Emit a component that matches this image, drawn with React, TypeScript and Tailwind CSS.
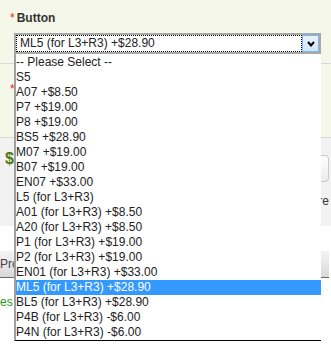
import React from 'react';

const options = [
  '-- Please Select --',
  'S5',
  'A07 +$8.50',
  'P7 +$19.00',
  'P8 +$19.00',
  'BS5 +$28.90',
  'M07 +$19.00',
  'B07 +$19.00',
  'EN07 +$33.00',
  'L5 (for L3+R3)',
  'A01 (for L3+R3) +$8.50',
  'A20 (for L3+R3) +$8.50',
  'P1 (for L3+R3) +$19.00',
  'P2 (for L3+R3) +$19.00',
  'EN01 (for L3+R3) +$33.00',
  'ML5 (for L3+R3) +$28.90',
  'BL5 (for L3+R3) +$28.90',
  'P4B (for L3+R3) -$6.00',
  'P4N (for L3+R3) -$6.00',
];

const selected = 'ML5 (for L3+R3) +$28.90';

// Open native-looking select, drawn over the product form
const OpenSelect: React.FC = () => (
  <div className="absolute left-[14px] top-[33px] w-[307px]">
    <div className="flex h-[21px] border-2 border-[#a9a9a9] bg-white">
      <div className="flex flex-1 items-center border border-dotted border-black pl-[3px] leading-[15px] text-[#222]">
        {selected}
      </div>
      <div className="flex w-[17px] items-center justify-center border border-[#7eb4ea] bg-gradient-to-b from-[#e8f3fe] to-[#d2e6fb]">
        <svg width="8" height="6" viewBox="0 0 8 6">
          <path d="M1 1 L4 4.5 L7 1" fill="none" stroke="#000" strokeWidth={2} />
        </svg>
      </div>
    </div>
    <ul className="border-b border-l-2 border-b-black border-l-[#a0a0a0] bg-white pt-[1px]">
      {options.map((opt) => (
        <li
          key={opt}
          className={`h-[15px] whitespace-nowrap leading-[15px] ${
            opt === selected ? 'bg-[#3399ff] text-white' : 'text-[#222]'
          }`}
        >
          {opt}
        </li>
      ))}
    </ul>
  </div>
);

export default function App() {
  return (
    <div className="relative h-[348px] w-[331px] overflow-hidden bg-white font-['Liberation_Sans',Arial,sans-serif] text-[12px] text-[#222]">
      {/* Button option */}
      <div className="h-[64px] border-b border-[#d9d9d9] bg-[#f5f8e9] pl-[10px] pt-[11px]">
        <div className="flex leading-[15px]">
          <span className="text-[#e8261a]">*</span>
          <span className="ml-[2px] font-bold text-[#333]">Button</span>
        </div>
      </div>

      {/* Second option, its label hidden under the list */}
      <div className="h-[74px] border-b border-[#d9d9d9] bg-[#f5f8e9] pl-[10px] pt-[16px]">
        <span className="leading-[15px] text-[#e8261a]">*</span>
      </div>

      {/* Price and quantity */}
      <div className="h-[88px] bg-[#f2f2f2] pl-[5px] pr-[2px] pt-[11px]">
        <div className="flex items-start gap-[20px]">
          <span className="text-[16px] font-bold leading-[20px] text-[#4f7a12]">$</span>
          <div className="mt-[6px] h-[27px] flex-1 rounded-[4px] border border-[#c9c9c9] bg-gradient-to-b from-white to-[#ececec]" />
        </div>
        <div className="mt-[12px] text-right leading-[15px] text-[#333]">re</div>
      </div>

      {/* Checkout */}
      <div className="pr-[2px] pt-[25px]">
        <div className="flex h-[27px] items-center border-b border-[#6b6b6b] bg-gradient-to-b from-[#f4f4f4] to-[#d9d9d9] leading-[15px] text-[#444]">
          Pro
        </div>
        <div className="mt-[17px] leading-[15px] text-[#1f9a1f]">es</div>
      </div>

      <OpenSelect />
    </div>
  );
}
